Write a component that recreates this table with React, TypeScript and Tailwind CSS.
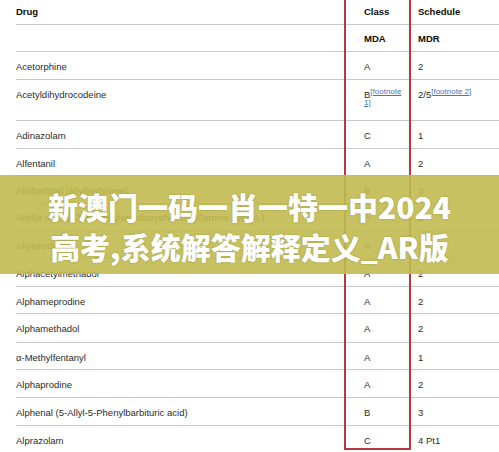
import React from 'react';

type Row = {
  drug: string;
  cls: React.ReactNode;
  sched: React.ReactNode;
  h: string;
};

const rows: Row[] = [
  { drug: 'Acetorphine', cls: 'A', sched: '2', h: 'h-[28px]' },
  {
    drug: 'Acetyldihydrocodeine',
    cls: (
      <>
        <span className="whitespace-nowrap">
          B<sup className="text-[8px] text-[#4c76b2] underline">[footnote</sup>
        </span>
        <br />
        <sup className="text-[8px] text-[#4c76b2] underline">1]</sup>
      </>
    ),
    sched: (
      <span className="whitespace-nowrap">
        2/5<sup className="text-[8px] text-[#4c76b2] underline">[footnote 2]</sup>
      </span>
    ),
    h: 'h-[41px]',
  },
  { drug: 'Adinazolam', cls: 'C', sched: '1', h: 'h-[28px]' },
  { drug: 'Alfentanil', cls: 'A', sched: '2', h: 'h-[27px]' },
  { drug: 'Allobarbital (allylbarbitone)', cls: 'B', sched: '3', h: 'h-[27.75px]' },
  { drug: 'Allyl(α-methyl-3,4-methylenedioxyphenethyl)amine (MDAL)', cls: 'A', sched: '1', h: 'h-[27.75px]' },
  { drug: 'Allylprodine', cls: 'A', sched: '2', h: 'h-[27.75px]' },
  { drug: 'Alphacetylmethadol', cls: 'A', sched: '2', h: 'h-[27.75px]' },
  { drug: 'Alphameprodine', cls: 'A', sched: '2', h: 'h-[27px]' },
  { drug: 'Alphamethadol', cls: 'A', sched: '2', h: 'h-[29px]' },
  { drug: 'α-Methylfentanyl', cls: 'A', sched: '1', h: 'h-[27px]' },
  { drug: 'Alphaprodine', cls: 'A', sched: '2', h: 'h-[28px]' },
  { drug: 'Alphenal (5-Allyl-5-Phenylbarbituric acid)', cls: 'B', sched: '3', h: 'h-[28px]' },
  { drug: 'Alprazolam', cls: 'C', sched: '4 Pt1', h: 'h-[28px]' },
];

export default function App() {
  return (
    <div className="relative w-[499px] h-[452px] overflow-hidden bg-white font-['Liberation_Sans',Arial,sans-serif] text-[9.5px] text-[#2b2b2b]">
      <div className="pl-[16px]">
        {/* header */}
        <div className="grid grid-cols-[348px_54px_1fr] h-[25px] pt-[6px] leading-[11px] font-bold text-[#0b0c0c] border-b border-[#c9c9c9]">
          <div>Drug</div>
          <div>Class</div>
          <div>Schedule</div>
        </div>
        <div className="grid grid-cols-[348px_54px_1fr] h-[27px] pt-[8px] leading-[11px] font-bold text-[#0b0c0c] border-b border-[#c9c9c9]">
          <div></div>
          <div>MDA</div>
          <div>MDR</div>
        </div>

        {rows.map((r) => (
          <div
            key={r.drug}
            className={`grid grid-cols-[348px_54px_1fr] ${r.h} pt-[8.5px] leading-[11px] border-b border-[#c9c9c9]`}
          >
            <div className="whitespace-nowrap">{r.drug}</div>
            <div className="pr-[8px]">{r.cls}</div>
            <div>{r.sched}</div>
          </div>
        ))}
      </div>

      {/* red highlight around Class column */}
      <div className="absolute left-[344px] top-[-4px] w-[67px] h-[454px] border-2 border-[#b33a3e]" />

      {/* banner */}
      <div className="absolute left-0 top-[175px] w-full h-[99px] pt-[11px] bg-[#c1ba50]/90 text-center text-white text-[30px] leading-[40px] font-black font-['Noto_Sans_CJK_SC',sans-serif] [text-shadow:0_0_2px_rgba(80,80,20,0.35)]">
        <div>新澳门一码一肖一特一中2024</div>
        <div>高考,系统解答解释定义_AR版</div>
      </div>
    </div>
  );
}
